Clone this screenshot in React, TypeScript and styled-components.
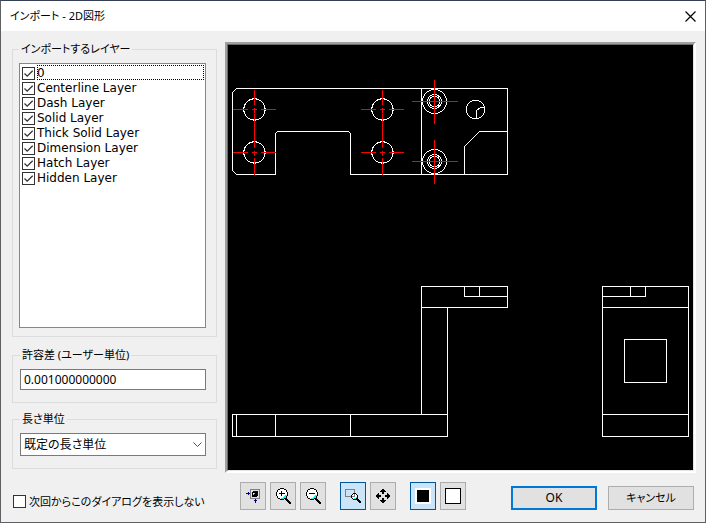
import React, { useState } from 'react';
import styled, { createGlobalStyle, css } from 'styled-components';

const GlobalStyle = createGlobalStyle`
  * { box-sizing: border-box; }
  html, body, #root { height: 100%; }
  body {
    margin: 0;
    color: #000;
    font: 12px/16px "Noto Sans", "Noto Sans CJK JP", sans-serif;
    font-feature-settings: "palt";
  }
  button, input, select { font: inherit; color: inherit; font-feature-settings: inherit; }
`;

const Dialog = styled.main`
  display: flex;
  flex-direction: column;
  min-height: 100%;
  background: #f0f0f0;
  border: 1px solid #5f6064;
  border-top-color: #353f55;
`;

const TitleBar = styled.header`
  display: flex;
  align-items: center;
  justify-content: space-between;
  height: 30px;
  padding-left: 9px;
  background: #fff;
`;

const Title = styled.h1`
  margin: 0;
  font: inherit;
  font-size: 11px;
`;

const CloseButton = styled.button`
  display: flex;
  align-items: center;
  justify-content: center;
  width: 30px;
  height: 30px;
  padding: 0;
  border: 0;
  background: none;
`;

const Content = styled.div`
  flex: 1;
  display: grid;
  grid-template-columns: 205px minmax(0, 1fr);
  grid-template-rows: minmax(0, 1fr) 49px;
  column-gap: 8px;
  padding: 11px 9px 0 11px;
`;

const Sidebar = styled.div`
  display: flex;
  flex-direction: column;
  gap: 9px;
  padding-bottom: 4px;
`;

const Group = styled.fieldset<{ $grow?: boolean }>`
  display: flex;
  flex-direction: column;
  min-width: 0;
  margin: 0;
  padding: 7px 10px 12px 7px;
  border: 1px solid #dcdcdc;
  ${p => p.$grow && css`
    flex: 1;
    margin-bottom: 2px;
    padding: 7px 10px 8px 6px;
  `}
`;

const Legend = styled.legend`
  padding: 0 2px;
  font-size: 11px;
  line-height: 14px;
`;

const LayerList = styled.ul`
  flex: 1;
  margin: 0;
  padding: 1px;
  list-style: none;
  background: #fff;
  border: 1px solid #828790;
  font-family: "DejaVu Sans", sans-serif;
`;

const CheckLabel = styled.label`
  display: flex;
  align-items: center;
  gap: 3px;
  white-space: nowrap;
`;

const LayerRow = styled(CheckLabel)`
  align-items: flex-end;
  height: 15px;
  padding-left: 1px;
  gap: 2px;
`;

const LayerName = styled.span<{ $focused: boolean }>`
  flex: 1;
  height: 15px;
  line-height: 14px;
  border: 1px dotted ${p => (p.$focused ? '#000' : 'transparent')};
  text-indent: -1px;
`;

const CheckBox = styled.input`
  appearance: none;
  flex: none;
  width: 13px;
  height: 13px;
  margin: 0;
  background: #fff;
  border: 1px solid #333;
  &:checked {
    background: #fff url("data:image/svg+xml,%3Csvg xmlns='http://www.w3.org/2000/svg' viewBox='0 0 11 11'%3E%3Cpath d='M1.5 5.5l2.700 2.700 5.500-5.500' fill='none' stroke='%23333' stroke-width='1.300'/%3E%3C/svg%3E") center / 11px;
  }
`;

const TextField = styled.input`
  width: 100%;
  height: 21px;
  padding: 0 3px;
  background: #fff;
  border: 1px solid #7a7a7a;
`;

const SelectBox = styled.div`
  display: grid;
  align-items: center;
  > * { grid-area: 1 / 1; }
  > svg { justify-self: end; margin-right: 4px; pointer-events: none; }
`;

const Select = styled.select`
  appearance: none;
  width: 100%;
  height: 23px;
  padding: 0 20px 0 3px;
  background: #fff;
  border: 1px solid #7a7a7a;
  border-radius: 0;
`;

const Preview = styled.div`
  min-width: 0;
  background: #000;
  border: 2px solid;
  border-color: #a0a0a0 #fff #fff #a0a0a0;
  > div {
    height: 100%;
    border: 1px solid;
    border-color: #696969 #e3e3e3 #e3e3e3 #696969;
  }
  svg { display: block; width: 100%; height: 100%; }
`;

const SkipOption = styled(CheckLabel)`
  align-self: end;
  height: 13px;
  margin: 0 0 14px 1px;
  font-size: 11px;
`;

const Footer = styled.div`
  display: flex;
  justify-content: space-between;
  padding: 9px 2px 0 15px;
`;

const Toolbar = styled.div`
  display: flex;
  gap: 14px;
`;

const ToolGroup = styled.div`
  display: flex;
  gap: 4px;
`;

const ToolButton = styled.button`
  display: flex;
  align-items: center;
  justify-content: center;
  width: 26px;
  height: 28px;
  padding: 0;
  background: #e1e1e1;
  border: 1px solid #adadad;
  &[aria-pressed='true'] {
    background: #cce4f7;
    border-color: #005499;
  }
`;

const Actions = styled.div`
  display: flex;
  gap: 11px;
  padding-top: 4px;
`;

const ActionButton = styled.button<{ $primary?: boolean }>`
  width: 86px;
  height: 24px;
  padding: 0;
  background: #e1e1e1;
  font-size: ${p => (p.$primary ? '12px' : '11px')};
  border: ${p => (p.$primary ? '2px solid #0078d7' : '1px solid #adadad')};
`;

const PixelSvg = styled.svg`
  display: block;
  shape-rendering: crispEdges;
`;

const layers = ['0', 'Centerline Layer', 'Dash Layer', 'Solid Layer', 'Thick Solid Layer', 'Dimension Layer', 'Hatch Layer', 'Hidden Layer'];

const Cross = ({ x, y }: { x: number; y: number }) => (
  <path d={`M${x - 22} ${y}h15m4 0h5m4 0h15M${x} ${y - 2}v5`} />
);

function Drawing() {
  return (
    <svg viewBox="228 45 465 425" preserveAspectRatio="xMinYMin meet" fill="none" stroke="#fff" shapeRendering="crispEdges" role="img" aria-label="2D図形">
      <g transform="translate(0.5 0.5)">
        <path d="M275 174h-39l-4-4V92l4-4h271v86H350v-41l-2-2h-71l-2 2zM421 88v86M464 174v-28l15-15h28" />
        {[254, 382].map(x => [109, 152].map(y => <circle key={`${x}-${y}`} cx={x} cy={y} r="10.700" />))}
        {[101, 161].map(y => [12, 7, 5.3].map(r => <circle key={`${y}-${r}`} cx="434" cy={y} r={r} />))}
        <circle cx="475" cy="109" r="9.300" />
        <path d="M476 118v-8l4-3h4" />
        <path d="M421 414V286h86v21h-86M464 286v10h43M479 286v10M232 414h215v22H232zM236 414v22M275 414v22M350 414v22M447 307v107" />
        <path d="M602 286h86v150h-86zM602 296h43v-10M630 286v10M602 307h86M602 414h86M624 339h42v43h-42z" />
      </g>
      <g stroke="#f00" transform="translate(0.5 0.5)">
        {[254, 382].map(x => <React.Fragment key={x}>
          <Cross x={x} y={109} /><Cross x={x} y={152} />
          <path d={`M${x} 89v15m0 9v34m0 10v17`} />
        </React.Fragment>)}
        <path d="M411 101h46M434 79v44M411 161h46M434 139v44" />
      </g>
    </svg>
  );
}

const ExtentsIcon = () => (
  <PixelSvg width="16" height="16" viewBox="0 0 16 16">
    <path fill="none" stroke="#808080" d="M5.500 1.500h9v9h-9z" />
    <path fill="#000080" d="M8 3h5v5h-1v1H7V4h1z" />
    <path d="M7 4h5v5H7z" />
    <path fill="#fff" d="M8 5h1v1H8z" /><path fill="#0ff" d="M9 5h1v1H9zM8 6h1v1H8z" />
    <path fill="#000080" d="M1 5h4v1H1zM3 4h1v3H3zM10 11h1v4h-1zM9 12h3v1H9z" />
  </PixelSvg>
);

const ZoomIcon = ({ plus }: { plus?: boolean }) => (
  <PixelSvg width="16" height="16" viewBox="0 0 16 16">
    <path fill="#fff" d="M5 1h4v1h2v2h1v5h-1v2H9v1H5v-1H3V9H2V4h1V2h2z" />
    <path d="M5 0h4v1H5zM3 1h2v1H3zM9 1h2v1H9zM2 2h1v2H2zM11 2h1v2h-1zM1 4h1v4H1zM12 4h1v4h-1zM2 8h1v2H2zM11 8h1v2h-1zM3 10h2v1H3zM9 10h2v1H9zM5 11h4v1H5z" />
    <path fill="#0ff" d="M10 7h2v1h-1v2H9v1H6v-1h2V9h1V8h1z" />
    <path d="M4 5h6v1H4z" />
    {plus && <path d="M6 3h1v5H6z" />}
    <path d="M10 10h2v1h1v1h1v1h1v1h1v2h-2v-1h-1v-1h-1v-1h-1v-1h-1z" />
  </PixelSvg>
);

const WindowIcon = () => (
  <PixelSvg width="16" height="16" viewBox="0 0 16 16">
    <path fill="none" stroke="#808080" d="M.5 1.500h9v7h-9z" />
    <path fill="#fff" d="M8 6h3v1h1v3h-1v1H8v-1H7V7h1z" />
    <path d="M8 5h3v1H8zM7 6h1v1H7zM11 6h1v1h-1zM6 7h1v3H6zM12 7h1v3h-1zM7 10h1v1H7zM8 11h3v1H8z" />
    <path fill="#808080" d="M9 6h1v2H9zM7 8h3v1H7z" />
    <path fill="#0ff" d="M9 10h2v1H9zM11 9h1v1h-1z" />
    <path d="M11 10h2v1h1v1h1v1h1v2h-2v-1h-1v-1h-1v-1h-1z" />
  </PixelSvg>
);

const PanIcon = () => (
  <PixelSvg width="14" height="14" viewBox="0 0 14 14">
    <path d="M6 0h2v1h1v1h1v1H8v2H6V3H4V2h1V1h1zM6 14h2v-1h1v-1h1v-1H8V9H6v2H4v1h1v1h1zM0 6h1V5h1V4h1v2h2v2H3v2H2V9H1V8H0zM14 6h-1V5h-1V4h-1v2H9v2h2v2h1V9h1V8h1z" />
  </PixelSvg>
);

const BlackIcon = () => <PixelSvg width="16" height="16" viewBox="0 0 16 16"><path fill="#fff" d="M0 0h16v16H0z" /><path d="M2 2h12v12H2z" /></PixelSvg>;
const WhiteIcon = () => <PixelSvg width="16" height="16" viewBox="0 0 16 16"><path d="M0 0h16v16H0z" /><path fill="#fff" d="M1 1h14v14H1z" /></PixelSvg>;

export default function App() {
  const [mode, setMode] = useState('window');
  const [background, setBackground] = useState('black');
  const [focused, setFocused] = useState('0');
  return (
    <>
      <GlobalStyle />
      <Dialog>
        <TitleBar>
          <Title>インポート - 2D図形</Title>
          <CloseButton aria-label="閉じる">
            <svg width="11" height="11" viewBox="0 0 11 11"><path d="M.5.5l10 10M10.500.5l-10 10" stroke="#000" strokeWidth="1.200" /></svg>
          </CloseButton>
        </TitleBar>
        <Content>
          <Sidebar>
            <Group $grow>
              <Legend>インポートするレイヤー</Legend>
              <LayerList>
                {layers.map(name => (
                  <li key={name}>
                    <LayerRow>
                      <CheckBox type="checkbox" defaultChecked onFocus={() => setFocused(name)} />
                      <LayerName $focused={focused === name}>{name}</LayerName>
                    </LayerRow>
                  </li>
                ))}
              </LayerList>
            </Group>
            <Group>
              <Legend id="tolerance">許容差 (ユーザー単位)</Legend>
              <TextField aria-labelledby="tolerance" defaultValue="0.001000000000" />
            </Group>
            <Group>
              <Legend id="unit">長さ単位</Legend>
              <SelectBox>
                <Select aria-labelledby="unit"><option>既定の長さ単位</option></Select>
                <svg width="9" height="6" viewBox="0 0 9 6"><path d="M.5.5l4 4 4-4" fill="none" stroke="#555" /></svg>
              </SelectBox>
            </Group>
          </Sidebar>
          <Preview><div><Drawing /></div></Preview>
          <SkipOption><CheckBox type="checkbox" />次回からこのダイアログを表示しない</SkipOption>
          <Footer>
            <Toolbar>
              <ToolGroup>
                <ToolButton aria-label="全体表示"><ExtentsIcon /></ToolButton>
                <ToolButton aria-label="拡大"><ZoomIcon plus /></ToolButton>
                <ToolButton aria-label="縮小"><ZoomIcon /></ToolButton>
              </ToolGroup>
              <ToolGroup>
                <ToolButton aria-label="範囲拡大" aria-pressed={mode === 'window'} onClick={() => setMode('window')}><WindowIcon /></ToolButton>
                <ToolButton aria-label="移動" aria-pressed={mode === 'pan'} onClick={() => setMode('pan')}><PanIcon /></ToolButton>
              </ToolGroup>
              <ToolGroup>
                <ToolButton aria-label="黒の背景" aria-pressed={background === 'black'} onClick={() => setBackground('black')}><BlackIcon /></ToolButton>
                <ToolButton aria-label="白の背景" aria-pressed={background === 'white'} onClick={() => setBackground('white')}><WhiteIcon /></ToolButton>
              </ToolGroup>
            </Toolbar>
            <Actions>
              <ActionButton $primary>OK</ActionButton>
              <ActionButton>キャンセル</ActionButton>
            </Actions>
          </Footer>
        </Content>
      </Dialog>
    </>
  );
}
